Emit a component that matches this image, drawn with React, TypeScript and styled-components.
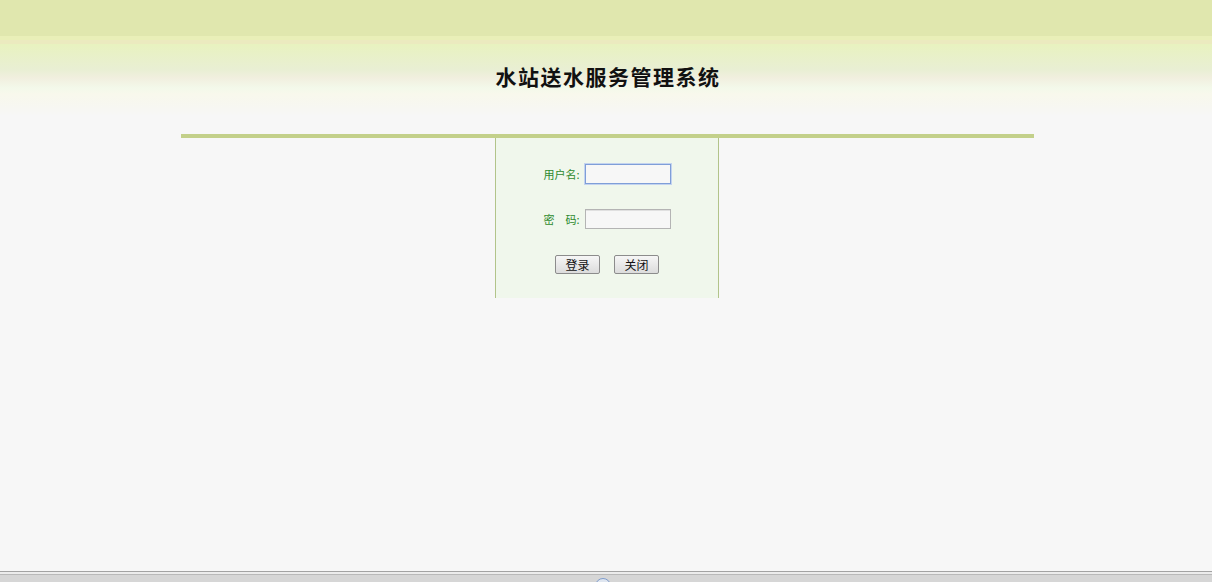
import React from "react";
import styled, { createGlobalStyle } from "styled-components";

const GlobalStyle = createGlobalStyle`
html, body {
	margin: 0;
	padding: 0;
	background: #f7f7f7;
	font-family: "Noto Sans CJK SC", "Liberation Sans", sans-serif;
}
`;

const App: React.FC = () => {
	return (
		<Page>
			<GlobalStyle />
			<Header>
				<Title>水站送水服务管理系统</Title>
			</Header>
			<Main>
				<Bar />
				<LoginBox>
					<Row>
						<Label>用户名:</Label>
						<Input type="text" $focused />
					</Row>
					<Row>
						<Label>密　码:</Label>
						<Input type="password" />
					</Row>
					<Buttons>
						<Button>登录</Button>
						<Button>关闭</Button>
					</Buttons>
				</LoginBox>
			</Main>
			<Footer>
				<FooterKnob />
			</Footer>
		</Page>
	);
};
export default App;

const Page = styled.div`
min-height: 100vh;
display: flex;
flex-direction: column;
`;

const Header = styled.div`
height: 116px;
display: flex;
align-items: flex-start;
justify-content: center;
padding-left: 4px;
background: linear-gradient(
	to bottom,
	#e0e7ae 0px,
	#e0e7ae 36px,
	#e9efb8 36px,
	#e9efb8 40px,
	#ebeabf 40px,
	#ebeabf 44px,
	#e8f2bf 44px,
	#e9efd4 70px,
	#f1efdf 78px,
	#f3f9ea 88px,
	#f8f8ec 94px,
	#f7f7f2 108px,
	#f7f7f7 116px
);
`;

const Title = styled.h1`
margin: 62px 0 0;
font-size: 21px;
line-height: 28px;
font-weight: bold;
color: #111;
letter-spacing: 1.5px;
`;

const Main = styled.div`
flex: 1;
display: flex;
flex-direction: column;
align-items: center;
padding-top: 18px;
padding-left: 2px;
`;

const Bar = styled.div`
width: 853px;
height: 4px;
background: #c3d08a;
`;

const LoginBox = styled.div`
width: 224px;
height: 160px;
box-sizing: border-box;
padding-top: 26px;
background: #f0f7ec;
border-left: 1px solid #b2c48a;
border-right: 1px solid #b2c48a;
display: flex;
flex-direction: column;
align-items: center;
`;

const Row = styled.div`
display: flex;
align-items: center;
margin-bottom: 25px;
`;

const Label = styled.span`
width: 40px;
margin-right: 1px;
font-size: 11px;
color: #2e8a2e;
white-space: nowrap;
`;

const Input = styled.input<{ $focused?: boolean }>`
width: 86px;
height: 20px;
box-sizing: border-box;
margin: 0;
padding: 0 2px;
background: #f7f7f7;
outline: none;
border: 1px solid ${(p) => (p.$focused ? "#7f9ed8" : "#b4b4b4")};
box-shadow: ${(p) => (p.$focused ? "0 0 0 1px #c3d3ef" : "inset 0 1px 0 #e0e0e0")};
`;

const Buttons = styled.div`
display: flex;
gap: 14px;
margin-top: 1px;
`;

const Button = styled.button`
width: 45px;
height: 19px;
padding: 0;
font-size: 12px;
line-height: 17px;
font-family: "Noto Sans CJK SC", sans-serif;
color: #111;
border: 1px solid #8c8c8c;
border-radius: 2px;
background: linear-gradient(to bottom, #f6f6f6, #dcdcdc);
`;

const Footer = styled.div`
height: 10px;
overflow: hidden;
display: flex;
justify-content: center;
border-top: 1px solid #a3a3a3;
background: linear-gradient(
	to bottom,
	#ececec 0px,
	#ececec 2px,
	#b9b9b9 2px,
	#b9b9b9 3px,
	#d6d6d6 3px
);
`;

const FooterKnob = styled.div`
width: 14px;
height: 14px;
margin-top: 6px;
margin-left: -6px;
border-radius: 50%;
border: 1px solid #7f9ccb;
background: #dfe6f0;
`;
